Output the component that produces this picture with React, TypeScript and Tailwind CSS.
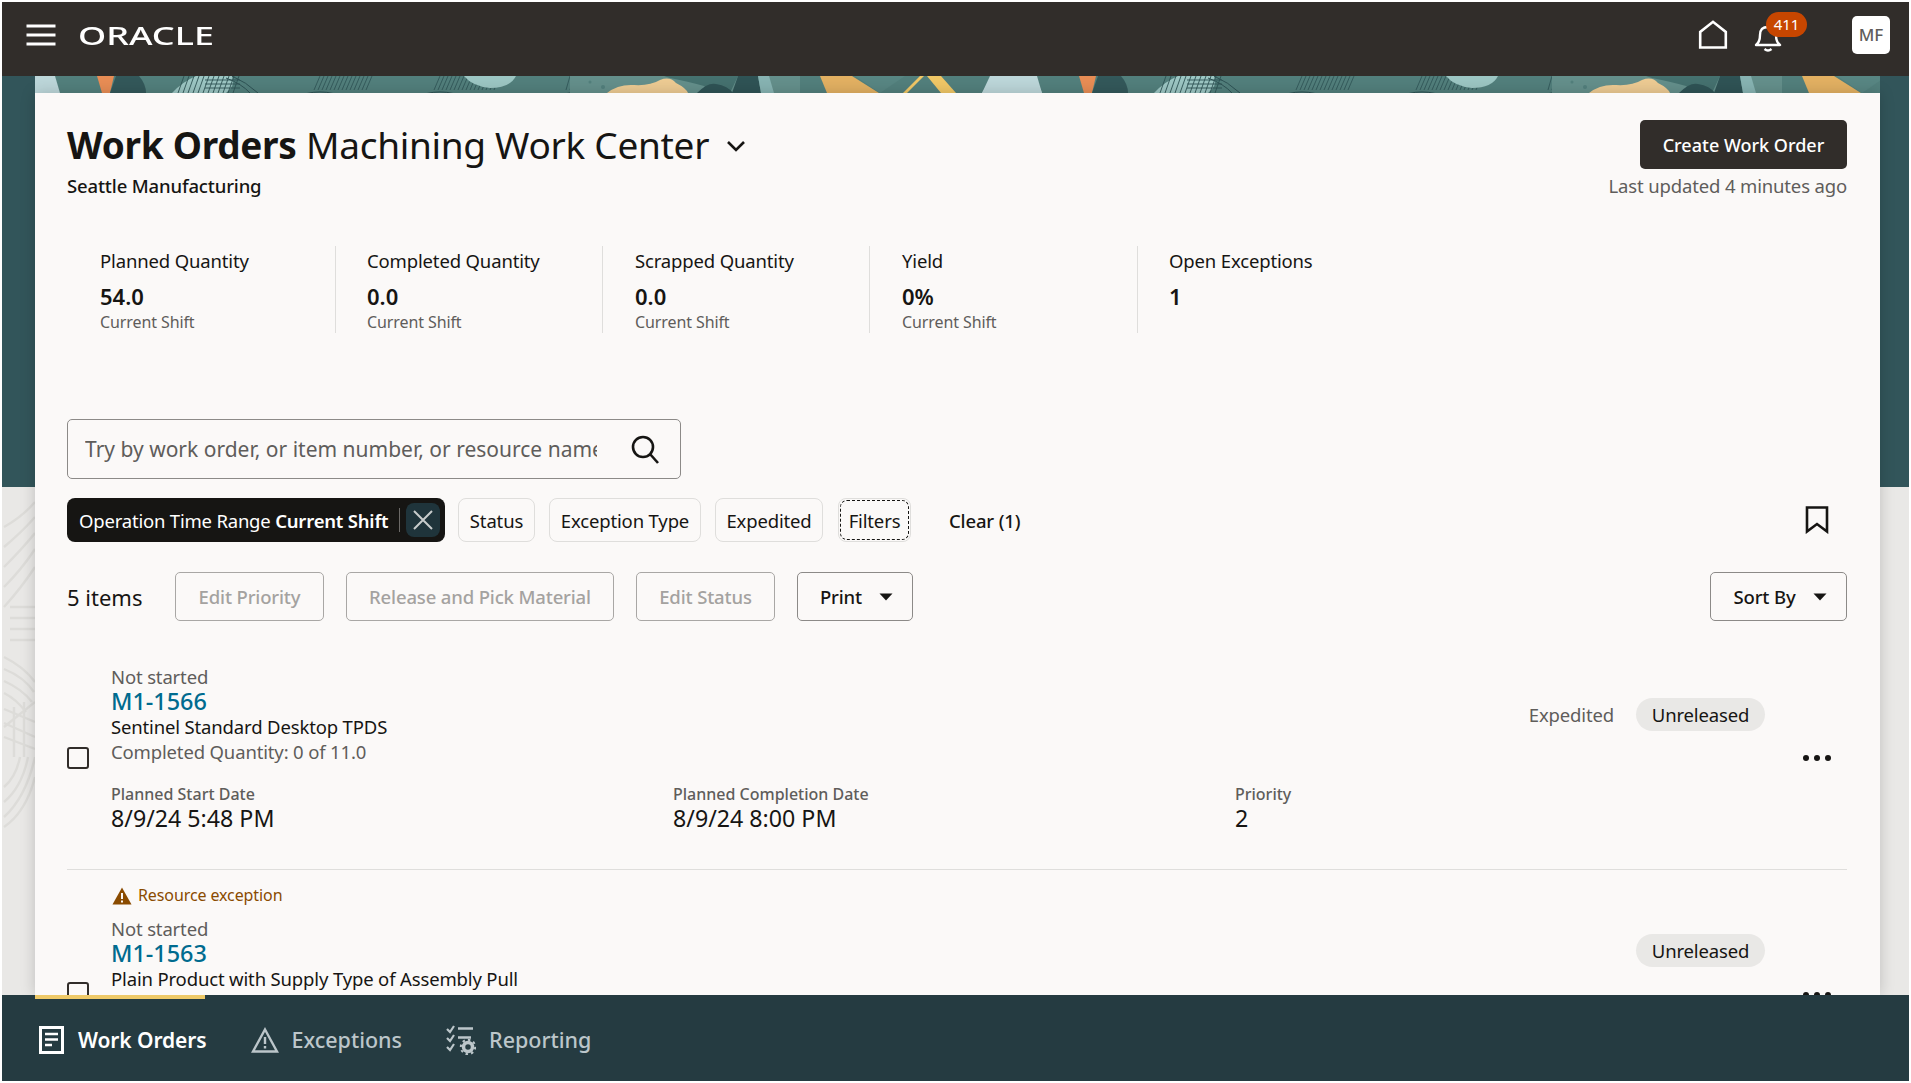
import React from "react";

const body = "text-[18.5px] tracking-[-0.15px]";

function Tile({ dx }: { dx: number }) {
  const arcs = [330, 450, 590];
  return (
    <g transform={`translate(${dx} 0)`}>
      <polygon points="0,17 8,0 55,0 60,17" fill="#bcd6d9" />
      <path d="M95 0 H112 L108 17 H100 Z" fill="#e88d55" transform="translate(2 0)" />
      <path d="M116 0 H139 Q146 8 146 17 H110 Z" fill="#33585a" />
      <path d="M172 17 Q182 6 196 0 H232 Q236 10 226 17 Z" fill="#9cc6c3" />
      {Array.from({ length: 12 }).map((_, i) => (
        <line key={i} x1={184 + i * 5} y1="0" x2={178 + i * 5} y2="17" stroke="#2f5355" strokeWidth="0.9" />
      ))}
      {[0, 1, 2].map((i) => (
        <line key={i} x1="205" y1={4 + i * 4} x2="240" y2={4 + i * 4} stroke="#2f5355" strokeWidth="0.9" />
      ))}
      <path d="M232 0 Q246 6 258 17" stroke="#2f5355" strokeWidth="1" fill="none" />
      <path d="M226 2 Q242 8 250 17" stroke="#2f5355" strokeWidth="1" fill="none" />
      {arcs.map((cx) =>
        [36, 40, 44, 48, 52, 56].map((r) => (
          <path key={`${cx}-${r}`} d={`M${cx - r} 40 A${r} ${r} 0 0 1 ${cx + r - 20} 40`} fill="none" stroke="#2c5052" strokeWidth="1" />
        ))
      )}
      {Array.from({ length: 14 }).map((_, i) => (
        <line key={i} x1={320 + i * 4} y1="0" x2={314 + i * 4} y2="14" stroke="#2f5355" strokeWidth="0.8" />
      ))}
      {Array.from({ length: 16 }).map((_, i) => (
        <line key={i} x1={440 + i * 4} y1="0" x2={434 + i * 4} y2="14" stroke="#2f5355" strokeWidth="0.8" />
      ))}
      <path d="M464 0 H516 Q510 12 490 12 Q472 10 464 0 Z" fill="#9cc6c3" />
      {Array.from({ length: 8 }).map((_, i) => (
        <line key={i} x1={570 + i * 4} y1="0" x2={566 + i * 4} y2="14" stroke="#2f5355" strokeWidth="0.8" />
      ))}
      <rect x="570" y="0" width="230" height="17" fill="#648f8b" />
      <circle cx="603" cy="11" r="2" fill="#527f7c" />
      <circle cx="590" cy="6" r="1.5" fill="#527f7c" />
      <path d="M607 17 Q618 8 634 9 Q650 10 660 4 Q670 0 676 7 Q686 12 688 17 Z" fill="#edcb93" />
      <path d="M664 0 H738 L730 17 H712 L704 10 Q690 6 670 2 Z" fill="#45716f" />
      <path d="M697 17 Q708 6 716 8 Q728 10 733 17 Z" fill="#2f5355" />
      <path d="M738 0 H758 L761 17 H732 Z" fill="#2f5355" />
      <path d="M758 0 H769 L774 17 H761 Z" fill="#87b3b2" />
      <path d="M820 0 H852 L879 17 H827 Z" fill="#e2b062" />
      <path d="M855 0 H905 L880 17 Z" fill="#588683" />
      <path d="M920 0 H924 L907 17 H903 Z" fill="#f0c766" />
      <path d="M927 0 H941 L956 17 H941 Z" fill="#f0c766" />
      <polygon points="992,0 1035,0 1042,17 982,17" fill="#bcd6d9" />
    </g>
  );
}

function Banner() {
  return (
    <div className="h-[17px] w-full overflow-hidden">
      <svg width="100%" height="17" viewBox="35 0 1845 17" preserveAspectRatio="none" className="block">
        <rect x="35" y="0" width="1845" height="17" fill="#527f7c" />
        <Tile dx={0} />
        <Tile dx={982} />
      </svg>
    </div>
  );
}

function Caret() {
  return (
    <svg width="14" height="8" viewBox="0 0 14 8" className="block">
      <path d="M0.5 0.5 H13.5 L7 7.5 Z" fill="#161513" />
    </svg>
  );
}

function Metric({ label, value, sub, w, last }: { label: string; value: string; sub?: string; w: string; last?: boolean }) {
  return (
    <div className={`h-[87px] pt-[4px] ${w} ${last ? "" : "border-r border-[#dfdedc]"}`}>
      <div className={`${body} leading-[21px] text-[#161513]`}>{label}</div>
      <div className="mt-[12px] text-[22px] leading-[26px] font-semibold text-[#161513]">{value}</div>
      {sub && <div className="mt-[3px] text-[16px] leading-[20px] tracking-[-0.1px] text-[#5f5d5b]">{sub}</div>}
    </div>
  );
}

function Chip({ children, className }: { children: React.ReactNode; className: string }) {
  return (
    <div className={`h-[44px] pt-[1px] flex items-center justify-center rounded-[8px] border border-[#dfdedc] ${body} text-[#161513] ${className}`}>
      {children}
    </div>
  );
}

function ActionBtn({ children, className, enabled }: { children: React.ReactNode; className: string; enabled?: boolean }) {
  return (
    <div
      className={`h-[49px] pt-[1px] flex items-center justify-center rounded-[5px] border ${body} font-medium ${
        enabled ? "text-[#161513] border-[#8c8a88]" : "text-[#a4a2a0] border-[#a9a7a5]"
      } ${className}`}
    >
      {children}
    </div>
  );
}

function Checkbox({ className }: { className: string }) {
  return <div className={`w-[22px] h-[22px] rounded-[3px] border-2 border-[#312d2a] shrink-0 ${className}`} />;
}

function Dots({ className }: { className: string }) {
  return (
    <div className={`flex gap-[5px] ${className}`}>
      <span className="w-[6px] h-[6px] rounded-full bg-[#161513]" />
      <span className="w-[6px] h-[6px] rounded-full bg-[#161513]" />
      <span className="w-[6px] h-[6px] rounded-full bg-[#161513]" />
    </div>
  );
}

function Pill() {
  return (
    <div className={`w-[129px] h-[33px] rounded-full bg-[#e9e8e6] flex items-center justify-center ${body} text-[#161513]`}>
      Unreleased
    </div>
  );
}

export default function App() {
  return (
    <div className="w-full h-[1083px] p-[2px] bg-white flex flex-col overflow-hidden font-['Noto_Sans',sans-serif]">
      <header className="h-[74px] shrink-0 bg-[#312d2a] flex items-center pb-[8px] pl-[24px] pr-[19px] text-white">
        <svg width="30" height="22" viewBox="0 0 30 22" className="block">
          <path d="M0.5 2 H29.5 M0.5 11 H29.5 M0.5 20 H29.5" stroke="#fff" strokeWidth="3" />
        </svg>
        <div className="ml-[22px] w-[136px] text-[25px] leading-[25px] scale-x-[1.44] origin-left font-medium">ORACLE</div>
        <div className="flex-1" />
        <svg width="30" height="30" viewBox="0 0 30 30" className="block mr-[26px]">
          <path d="M2.2 27.5 V12 L15 1.8 L27.8 12 V27.5 Z" fill="none" stroke="#fff" strokeWidth="2.6" />
        </svg>
        <div className="relative w-[55px] h-[38px] mr-[43px]">
          <svg width="30" height="30" viewBox="0 0 30 30" className="block absolute left-0 top-[7px]">
            <path d="M2 22 Q6 19 6 12 Q6 4 14 4 Q22 4 22 12 Q22 19 26 22 Z" fill="none" stroke="#fff" strokeWidth="2.4" strokeLinejoin="round" />
            <path d="M10.5 26 Q14 29 17.5 26" fill="none" stroke="#fff" strokeWidth="2.4" />
          </svg>
          <div className="absolute left-[12px] top-[-4px] w-[41px] h-[25px] rounded-full bg-[#c74600] text-[15px] leading-[25px] text-center">411</div>
        </div>
        <div className="w-[38px] h-[38px] rounded-[5px] bg-white text-[#5f5d5b] text-[17px] font-medium flex items-center justify-center">MF</div>
      </header>

      <main className="relative flex-1 min-h-0 overflow-hidden pl-[33px] pr-[29px] bg-[linear-gradient(#32555a_0,#32555a_411px,#e9e8e6_411px)]">
        <svg width="33" height="360" viewBox="0 0 33 360" className="absolute left-0 top-[411px] blur-[0.6px]" fill="none" stroke="#dddcd9" strokeWidth="2.4">
          <path d="M2 40 Q20 30 33 15 M2 60 Q20 45 33 30 M2 80 Q20 62 33 46 M2 100 Q20 82 33 62 M2 120 Q20 100 33 80" />
          <path d="M8 120 H33 M8 131 H33 M8 142 H33 M8 153 H33" />
          <path d="M2 170 Q22 180 33 195 M2 182 Q22 190 32 205 M2 194 Q20 202 30 215 M2 206 Q14 212 24 225" />
          <path d="M2 240 L33 215 M2 222 L33 235 M2 236 L33 250 M2 250 L33 262" />
          <path d="M12 220 V270 M22 215 V270" />
          <path d="M2 330 Q24 310 33 270 M2 340 Q24 325 33 290 M2 300 Q14 290 18 270 M2 315 Q20 300 26 270" />
        </svg>

        <div className="relative h-full flex flex-col">
          <Banner />
          <div className="flex-1 min-h-0 bg-[#fbf9f8] overflow-hidden pl-[32px] pr-[33px] shadow-[0_0_14px_rgba(0,0,0,0.18)]">
            {/* title */}
            <div className="flex justify-between items-start pt-[27px]">
              <div>
                <div className="flex items-center h-[50px]">
                  <h1 className="text-[37px] tracking-[-0.3px] leading-[50px] text-[#161513]">
                    <span className="font-bold">Work Orders</span> <span>Machining Work Center</span>
                  </h1>
                  <svg width="20" height="12" viewBox="0 0 20 12" className="ml-[17px] mt-[2px] block">
                    <path d="M2 2 L10 10 L18 2" fill="none" stroke="#161513" strokeWidth="2.6" />
                  </svg>
                </div>
                <div className={`mt-[3px] ${body} leading-[26px] font-medium text-[#161513]`}>Seattle Manufacturing</div>
              </div>
              <div className="flex flex-col items-end">
                <div className="w-[207px] h-[49px] pt-[2px] rounded-[5px] bg-[#312d2a] text-white text-[18px] font-medium flex items-center justify-center">Create Work Order</div>
                <div className={`mt-[4px] ${body} leading-[26px] text-[#5f5d5b]`}>Last updated 4 minutes ago</div>
              </div>
            </div>

            {/* metrics */}
            <div className="mt-[47px] flex">
              <Metric w="w-[269px] pl-[33px]" label="Planned Quantity" value="54.0" sub="Current Shift" />
              <Metric w="w-[267px] pl-[31px]" label="Completed Quantity" value="0.0" sub="Current Shift" />
              <Metric w="w-[267px] pl-[32px]" label="Scrapped Quantity" value="0.0" sub="Current Shift" />
              <Metric w="w-[268px] pl-[32px]" label="Yield" value="0%" sub="Current Shift" />
              <Metric w="w-[260px] pl-[31px]" label="Open Exceptions" value="1" last />
            </div>

            {/* search */}
            <div className="mt-[86px] w-[614px] h-[60px] rounded-[5px] border border-[#8c8a88] flex items-center pl-[17px] pr-[20px]">
              <div className="w-[512px] pt-[2px] overflow-hidden whitespace-nowrap text-[21px] text-[#5f5d5b]">Try by work order, or item number, or resource name</div>
              <div className="flex-1" />
              <svg width="30" height="30" viewBox="0 0 30 30" className="block">
                <circle cx="13" cy="13" r="10" fill="none" stroke="#161513" strokeWidth="2.6" />
                <path d="M20 20 L28 29" stroke="#161513" strokeWidth="2.6" />
              </svg>
            </div>

            {/* chips */}
            <div className="mt-[19px] flex items-center h-[44px]">
              <div className="w-[378px] h-[44px] rounded-[8px] bg-[#161513] flex items-center pl-[12px] text-[18.5px] tracking-[-0.2px] text-white whitespace-nowrap">
                <span className="pt-[1px]">Operation Time Range <b className="font-semibold">Current Shift</b></span>
                <span className="ml-[11px] w-px h-[24px] bg-[#6b6967]" />
                <span className="ml-[6px] w-[34px] h-[34px] rounded-[8px] bg-[#1f343b] flex items-center justify-center">
                  <svg width="22" height="22" viewBox="0 0 22 22" className="block">
                    <path d="M2 2 L20 20 M20 2 L2 20" stroke="#c8cccc" strokeWidth="2" />
                  </svg>
                </span>
              </div>
              <Chip className="ml-[13px] w-[77px]">Status</Chip>
              <Chip className="ml-[14px] w-[152px]">Exception Type</Chip>
              <Chip className="ml-[14px] w-[108px]">Expedited</Chip>
              <div className="ml-[15px] w-[73px] h-[44px] rounded-[8px] border border-[#dfdedc] p-[1px]">
                <div className={`w-full h-full pt-[1px] rounded-[7px] border border-dashed border-[#161513] flex items-center justify-center ${body} text-[#161513]`}>Filters</div>
              </div>
              <div className={`ml-[38px] pt-[1px] ${body} font-medium text-[#161513]`}>Clear (1)</div>
              <div className="flex-1" />
              <svg width="24" height="28" viewBox="0 0 24 28" className="block mr-[18px]">
                <path d="M2 1.5 H22 V25.5 L12 18 L2 25.5 Z" fill="none" stroke="#161513" strokeWidth="2.6" />
              </svg>
            </div>

            {/* actions */}
            <div className="mt-[30px] flex items-center h-[49px]">
              <div className="w-[108px] pt-[1px] text-[22px] text-[#161513]">5 items</div>
              <ActionBtn className="w-[149px]">Edit Priority</ActionBtn>
              <ActionBtn className="ml-[22px] w-[268px]">Release and Pick Material</ActionBtn>
              <ActionBtn className="ml-[22px] w-[139px]">Edit Status</ActionBtn>
              <ActionBtn enabled className="ml-[22px] w-[116px] pl-[3px] gap-[17px]">Print <Caret /></ActionBtn>
              <div className="flex-1" />
              <ActionBtn enabled className="w-[137px] pl-[3px] gap-[17px]">Sort By <Caret /></ActionBtn>
            </div>

            {/* row 1 */}
            <div className="mt-[43px] flex h-[206px] border-b border-[#dfdedc]">
              <Checkbox className="mt-[83px]" />
              <div className="ml-[22px] flex-1 min-w-0">
                <div className="flex justify-between">
                  <div>
                    <div className={`${body} leading-[25px] text-[#5f5d5b]`}>Not started</div>
                    <div className="text-[23.4px] leading-[25px] font-medium text-[#006b8f]">M1-1566</div>
                    <div className={`${body} leading-[25px] text-[#161513]`}>Sentinel Standard Desktop TPDS</div>
                    <div className={`${body} leading-[25px] text-[#5f5d5b]`}>Completed Quantity: 0 of 11.0</div>
                  </div>
                  <div className="flex items-start">
                    <div className={`mt-[34px] flex items-center gap-[22px] ${body} text-[#5f5d5b]`}>
                      Expedited <Pill />
                    </div>
                    <div className="w-[82px] relative">
                      <Dots className="absolute right-[16px] top-[91px]" />
                    </div>
                  </div>
                </div>
                <div className="mt-[20px] grid grid-cols-[562px_562px_1fr]">
                  {[
                    ["Planned Start Date", "8/9/24 5:48 PM"],
                    ["Planned Completion Date", "8/9/24 8:00 PM"],
                    ["Priority", "2"],
                  ].map(([k, v]) => (
                    <div key={k}>
                      <div className="text-[16px] leading-[21px] font-medium text-[#5f5d5b]">{k}</div>
                      <div className="text-[23.2px] leading-[26px] text-[#161513]">{v}</div>
                    </div>
                  ))}
                </div>
              </div>
            </div>

            {/* row 2 */}
            <div className="pt-[15px] flex">
              <Checkbox className="mt-[97px]" />
              <div className="ml-[22px] flex-1 min-w-0">
                <div className="flex items-center text-[16px] tracking-[-0.1px] leading-[21px] text-[#8a4b00]">
                  <svg width="20" height="18" viewBox="0 0 20 18" className="block mr-[6px] ml-[1px]">
                    <path d="M10 0.5 L19.5 17.5 H0.5 Z" fill="#8a4b00" />
                    <path d="M10 6 V12 M10 13.5 V15.5" stroke="#fbf9f8" strokeWidth="2" />
                  </svg>
                  Resource exception
                </div>
                <div className="flex justify-between mt-[10px]">
                  <div>
                    <div className={`${body} leading-[25px] text-[#5f5d5b]`}>Not started</div>
                    <div className="text-[23.4px] leading-[25px] font-medium text-[#006b8f]">M1-1563</div>
                    <div className={`${body} leading-[25px] text-[#161513]`}>Plain Product with Supply Type of Assembly Pull</div>
                  </div>
                  <div className="flex items-start">
                    <div className="mt-[18px]"><Pill /></div>
                    <div className="w-[82px] relative">
                      <Dots className="absolute right-[16px] top-[76px]" />
                    </div>
                  </div>
                </div>
              </div>
            </div>
          </div>
        </div>
      </main>

      <nav className="relative h-[86px] shrink-0 bg-[#253b41] flex items-center pl-[37px] pt-[4px]">
        <div className="absolute left-[33px] top-0 w-[170px] h-[4px] bg-[#eec968]" />
        <svg width="25" height="28" viewBox="0 0 25 28" className="block">
          <rect x="1.5" y="1.5" width="22" height="25" fill="none" stroke="#fff" strokeWidth="3" />
          <path d="M6 8 H19 M6 13.5 H19 M6 19 H13" stroke="#fff" strokeWidth="2.4" />
        </svg>
        <div className="ml-[14px] pt-[2px] text-[21px] tracking-[-0.1px] font-semibold text-white">Work Orders</div>
        <svg width="28" height="26" viewBox="0 0 28 26" className="block ml-[44px]">
          <path d="M14 2.5 L26 24.5 H2 Z" fill="none" stroke="#bcc6ca" strokeWidth="2.4" />
          <path d="M14 10 V17 M14 19 V21.5" stroke="#bcc6ca" strokeWidth="2.4" />
        </svg>
        <div className="ml-[13px] text-[21.5px] font-medium text-[#bcc6ca]">Exceptions</div>
        <svg width="30" height="30" viewBox="0 0 30 30" className="block ml-[44px]">
          <path d="M1 4 L4 7 L8 1 M1 13 L4 16 L8 10 M1 22 L4 25 L8 19" fill="none" stroke="#bcc6ca" strokeWidth="2.2" />
          <path d="M12 3.5 H27 M12 12.5 H25" stroke="#bcc6ca" strokeWidth="2.6" />
          <circle cx="22" cy="22" r="4.5" fill="none" stroke="#bcc6ca" strokeWidth="3.5" />
          <circle cx="22" cy="22" r="7.2" fill="none" stroke="#bcc6ca" strokeWidth="2" strokeDasharray="2.5 3.1" />
        </svg>
        <div className="ml-[13px] text-[21.5px] font-medium text-[#bcc6ca]">Reporting</div>
      </nav>
    </div>
  );
}
